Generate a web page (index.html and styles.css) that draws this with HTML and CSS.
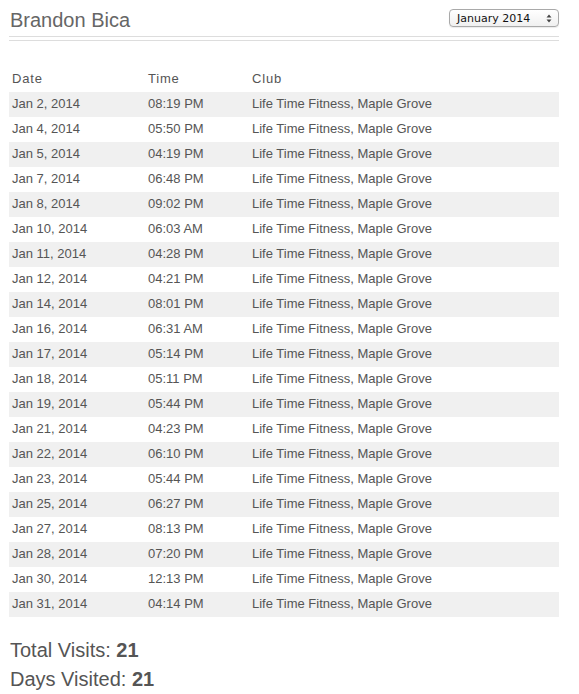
FILE: index.html
```html
<!DOCTYPE html>
<html>
<head>
<meta charset="utf-8">
<link rel="stylesheet" href="styles.css">
</head>
<body>
<div class="page">
  <header class="top">
    <h1 class="name">Brandon Bica</h1>
    <div class="select"><span>January 2014</span><span class="arrows"><svg width="6" height="9" viewBox="0 0 6 9"><path d="M0.5 3.5 L3 0.5 L5.5 3.5 Z M0.5 5.5 L3 8.5 L5.5 5.5 Z" fill="#444"/></svg></span></div>
  </header>
  <div class="rule"></div>
  <table class="visits">
    <thead>
      <tr><th class="c-date">Date</th><th class="c-time">Time</th><th>Club</th></tr>
    </thead>
    <tbody>
      <tr><td>Jan 2, 2014</td><td>08:19 PM</td><td>Life Time Fitness, Maple Grove</td></tr>
      <tr><td>Jan 4, 2014</td><td>05:50 PM</td><td>Life Time Fitness, Maple Grove</td></tr>
      <tr><td>Jan 5, 2014</td><td>04:19 PM</td><td>Life Time Fitness, Maple Grove</td></tr>
      <tr><td>Jan 7, 2014</td><td>06:48 PM</td><td>Life Time Fitness, Maple Grove</td></tr>
      <tr><td>Jan 8, 2014</td><td>09:02 PM</td><td>Life Time Fitness, Maple Grove</td></tr>
      <tr><td>Jan 10, 2014</td><td>06:03 AM</td><td>Life Time Fitness, Maple Grove</td></tr>
      <tr><td>Jan 11, 2014</td><td>04:28 PM</td><td>Life Time Fitness, Maple Grove</td></tr>
      <tr><td>Jan 12, 2014</td><td>04:21 PM</td><td>Life Time Fitness, Maple Grove</td></tr>
      <tr><td>Jan 14, 2014</td><td>08:01 PM</td><td>Life Time Fitness, Maple Grove</td></tr>
      <tr><td>Jan 16, 2014</td><td>06:31 AM</td><td>Life Time Fitness, Maple Grove</td></tr>
      <tr><td>Jan 17, 2014</td><td>05:14 PM</td><td>Life Time Fitness, Maple Grove</td></tr>
      <tr><td>Jan 18, 2014</td><td>05:11 PM</td><td>Life Time Fitness, Maple Grove</td></tr>
      <tr><td>Jan 19, 2014</td><td>05:44 PM</td><td>Life Time Fitness, Maple Grove</td></tr>
      <tr><td>Jan 21, 2014</td><td>04:23 PM</td><td>Life Time Fitness, Maple Grove</td></tr>
      <tr><td>Jan 22, 2014</td><td>06:10 PM</td><td>Life Time Fitness, Maple Grove</td></tr>
      <tr><td>Jan 23, 2014</td><td>05:44 PM</td><td>Life Time Fitness, Maple Grove</td></tr>
      <tr><td>Jan 25, 2014</td><td>06:27 PM</td><td>Life Time Fitness, Maple Grove</td></tr>
      <tr><td>Jan 27, 2014</td><td>08:13 PM</td><td>Life Time Fitness, Maple Grove</td></tr>
      <tr><td>Jan 28, 2014</td><td>07:20 PM</td><td>Life Time Fitness, Maple Grove</td></tr>
      <tr><td>Jan 30, 2014</td><td>12:13 PM</td><td>Life Time Fitness, Maple Grove</td></tr>
      <tr><td>Jan 31, 2014</td><td>04:14 PM</td><td>Life Time Fitness, Maple Grove</td></tr>
    </tbody>
  </table>
  <div class="totals">
    <p class="stat">Total Visits: <b>21</b></p>
    <p class="stat">Days Visited: <b>21</b></p>
  </div>
</div>
</body>
</html>
```
FILE: styles.css
```css
html, body {
  margin: 0;
  padding: 0;
  background: #fff;
}
body {
  font-family: "Liberation Sans", Arial, sans-serif;
  color: #555;
}
.page {
  width: 550px;
  padding: 0 9px;
}
.top {
  display: flex;
  justify-content: space-between;
  align-items: flex-start;
  height: 36px;
}
.name {
  margin: 0;
  padding: 8px 0 0 1px;
  font-size: 20px;
  font-weight: normal;
  line-height: 24px;
  color: #666;
}
.select {
  margin-top: 9px;
  box-sizing: border-box;
  width: 110px;
  height: 18px;
  border: 1px solid #a9a9a9;
  border-radius: 4px;
  background: linear-gradient(#fff, #f0f0f0);
  display: flex;
  align-items: center;
  justify-content: space-between;
  padding: 0 6px 0 7px;
  font-family: "DejaVu Sans", sans-serif;
  font-size: 11px;
  color: #111;
  box-shadow: 0 1px 1px rgba(0,0,0,0.08);
}
.arrows {
  display: flex;
  align-items: center;
}
.rule {
  height: 3px;
  border-top: 1px solid #ddd;
  border-bottom: 1px solid #ddd;
  margin-top: 0;
}
.visits {
  margin-top: 26px;
  width: 550px;
  border-collapse: collapse;
  font-size: 13px;
}
.visits th {
  text-align: left;
  font-weight: normal;
  letter-spacing: 0.8px;
  box-sizing: border-box;
  height: 25px;
  padding: 0 3px 2px;
  vertical-align: middle;
  color: #555;
}
.visits td {
  box-sizing: border-box;
  height: 25px;
  padding: 0 3px 2px;
  vertical-align: middle;
  color: #555;
}
.c-date { width: 136px; }
.c-time { width: 104px; }
.visits tbody tr:nth-child(odd) {
  background: #f0f0f0;
}
.totals {
  margin-top: 19px;
  padding-left: 1px;
}
.stat {
  margin: 0;
  font-size: 20px;
  line-height: 29px;
  color: #555;
}
.stat b {
  font-weight: bold;
}
```
